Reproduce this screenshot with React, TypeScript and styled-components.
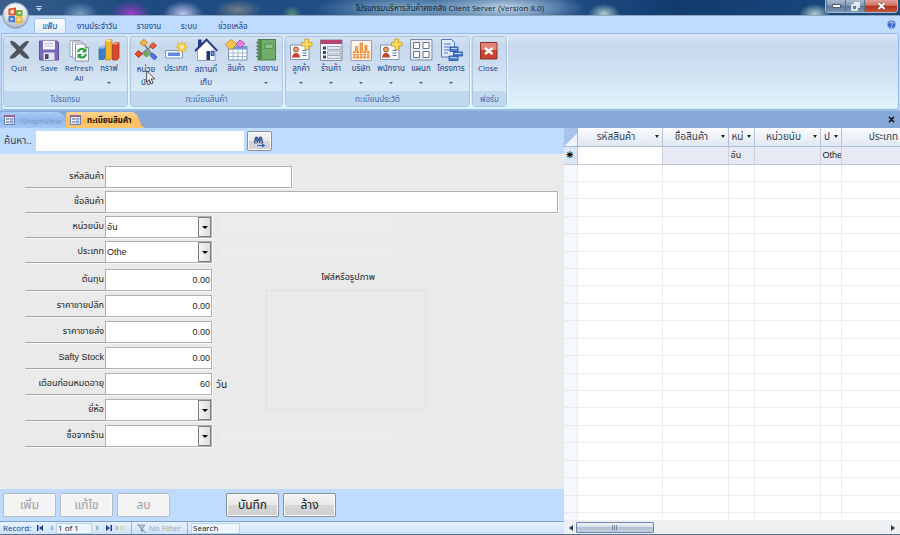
import React from "react";
import styled, { createGlobalStyle, css } from "styled-components";

const UI = `"Open Sans", "Noto Sans", "Noto Sans Thai", "Liberation Sans", sans-serif`;
const FORM = `"Liberation Sans", "Noto Sans Thai", sans-serif`;

const GlobalStyle = createGlobalStyle`
  *, *::before, *::after { box-sizing: border-box; }
  html, body { margin: 0; padding: 0; }
  body { font-family: ${UI}; font-size: 8px; color: #15428b; overflow: hidden; }
  button, input, select { font: inherit; color: inherit; margin: 0; border-radius: 0; }
  svg { display: block; }
`;

/* ---------- window frame ---------- */

const Window = styled.div`
  display: flex;
  flex-direction: column;
  height: 100vh;
  background: #bfdbff;
  border-bottom: 1px solid #56708f;
`;

const TitleBar = styled.header`
  display: grid;
  grid-template-columns: 1fr auto 1fr;
  align-items: start;
  height: 16px;
  border-bottom: 1px solid #8fa6bf;
  background:
    radial-gradient(ellipse 80px 18px at 505px 8px, rgba(200, 222, 240, 0.95), transparent),
    radial-gradient(ellipse 90px 16px at 405px 9px, rgba(150, 190, 215, 0.85), transparent),
    radial-gradient(ellipse 18px 12px at 80px 14px, rgba(150, 185, 215, 0.7), transparent),
    radial-gradient(ellipse 20px 13px at 131px 14px, rgba(160, 60, 200, 0.95), transparent),
    radial-gradient(ellipse 20px 13px at 183px 14px, rgba(200, 200, 240, 0.95), transparent),
    radial-gradient(ellipse 24px 10px at 238px 10px, rgba(130, 135, 135, 0.85), transparent),
    radial-gradient(ellipse 10px 8px at 292px 14px, rgba(100, 160, 110, 0.8), transparent),
    radial-gradient(ellipse 16px 10px at 604px 14px, rgba(190, 220, 210, 0.9), transparent),
    radial-gradient(ellipse 16px 10px at 815px 14px, rgba(190, 220, 210, 0.9), transparent),
    linear-gradient(90deg, #3a5f8c, #1d4a80 15%, #24528a 60%, #123c70 75%, #1b4a80);
`;

const QuickAccess = styled.div`
  padding: 6px 0 0 36px;
`;

const Title = styled.h1`
  margin: 0;
  font-size: 8px;
  line-height: 16px;
  font-weight: 400;
  color: #0b1a2c;
  white-space: nowrap;
`;

const WindowButtons = styled.div`
  justify-self: end;
  display: flex;
  margin-right: 2px;
  border: 1px solid #a9bdd2;
  border-top: 0;
  border-radius: 0 0 4px 4px;
  overflow: hidden;
`;

const WindowButton = styled.button<{ $danger?: boolean }>`
  display: grid;
  place-items: center;
  width: ${(p) => (p.$danger ? 33 : 19)}px;
  height: 12px;
  padding: 0;
  border: 0;
  border-left: 1px solid #5d7793;
  background: ${(p) =>
    p.$danger
      ? "linear-gradient(#e0a196, #d0705f 45%, #b2301a 50%, #c8543a)"
      : "linear-gradient(#a9bbce, #8299b3 45%, #5c7797 50%, #7d97b3)"};
`;

/* ---------- ribbon ---------- */

const MenuRow = styled.nav`
  display: flex;
  align-items: flex-end;
  height: 17px;
  padding-left: 34px;
  padding-right: 4px;
  background: #bfdbff;
`;

const MenuTab = styled.button<{ $active?: boolean; $w: number }>`
  width: ${(p) => p.$w}px;
  height: 15px;
  padding: 0;
  border: 0;
  background: transparent;
  font-size: 8px;
  line-height: 14px;
  white-space: nowrap;
  ${(p) =>
    p.$active &&
    css`
      border: 1px solid #a3c2ea;
      border-bottom: 0;
      border-radius: 3px 3px 0 0;
      background: linear-gradient(#f8fbff, #e3edf9);
    `}
`;

const HelpButton = styled.button`
  margin-left: auto;
  align-self: center;
  padding: 0;
  border: 0;
  background: none;
`;

const OfficeButton = styled.button`
  position: absolute;
  left: 2px;
  top: 2px;
  padding: 0;
  border: 0;
  background: none;
`;

const Ribbon = styled.div`
  display: flex;
  gap: 2px;
  height: 77px;
  margin: 0 1px;
  padding: 2px 1px;
  border: 1px solid #94bbec;
  border-radius: 3px;
  background: linear-gradient(#dbe6f4, #c7d8ed 16%, #cfdef0 45%, #e2f4fd);
  box-shadow: inset 0 -1px 0 #cdf4fb;
`;

const Group = styled.section<{ $w: number }>`
  display: flex;
  flex-direction: column;
  flex: 0 0 ${(p) => p.$w}px;
  border: 1px solid #abc6e6;
  border-radius: 3px;
  overflow: hidden;
  box-shadow: 1px 0 0 #eef6fd;
`;

const GroupItems = styled.div`
  flex: 1;
  display: flex;
`;

const GroupTitle = styled.h2`
  margin: 0;
  height: 15px;
  font-size: 8px;
  line-height: 15px;
  font-weight: 400;
  text-align: center;
  color: #3e6aaa;
  background: #c1d9f0;
`;

const ToolButton = styled.button`
  position: relative;
  flex: 0 0 30px;
  display: flex;
  flex-direction: column;
  align-items: center;
  min-width: 0;
  padding: 1px 0 0;
  border: 0;
  background: none;
  font-size: 8px;
  line-height: 10px;
`;

const ToolLabel = styled.span<{ $tall?: boolean }>`
  margin-top: ${(p) => (p.$tall ? 0 : 1)}px;
  line-height: ${(p) => (p.$tall ? 13 : 10)}px;
  white-space: nowrap;
`;

const Caret = styled.span`
  margin-top: 9px;
  border: 2px solid transparent;
  border-top-color: #33619f;
  border-bottom: 0;
`;

const Pointer = styled.svg`
  position: absolute;
  left: 15px;
  top: 33px;
`;

/* ---------- document tabs ---------- */

const DocTabs = styled.div`
  display: flex;
  align-items: flex-end;
  height: 18px;
  padding-right: 4px;
  background: #86a8d6;
  border-top: 1px solid #9fbce2;
`;

const DocTab = styled.button<{ $active?: boolean }>`
  display: flex;
  align-items: center;
  gap: 6px;
  width: ${(p) => (p.$active ? 79 : 66)}px;
  height: 16px;
  padding: 0 0 0 4px;
  border: 0;
  border-radius: 3px 10px 0 0;
  font-size: 8px;
  white-space: nowrap;
  color: ${(p) => (p.$active ? "#1a1208" : "#7c99c2")};
  font-weight: ${(p) => (p.$active ? 700 : 400)};
  background: ${(p) =>
    p.$active
      ? "linear-gradient(#fdd79a, #fbbd5c 50%, #fdc56c)"
      : "linear-gradient(#a9cbf6, #8fb8ee 50%, #a4c8f6)"};
  clip-path: ${(p) => (p.$active ? "polygon(0 0, 85% 0, 90% 20%, 96% 88%, 100% 100%, 0 100%)" : "none")};
`;

const CloseTab = styled.button`
  margin-left: auto;
  align-self: center;
  padding: 0;
  border: 0;
  background: none;
`;

/* ---------- body ---------- */

const Body = styled.main`
  flex: 1;
  display: flex;
  min-height: 0;
`;

const LeftPane = styled.div`
  flex: 564 1 0;
  min-width: 0;
  display: flex;
  flex-direction: column;
  font-family: ${FORM};
  font-size: 9px;
  color: #222;
`;

const SearchBar = styled.form`
  display: flex;
  align-items: center;
  height: 26px;
  padding-left: 4px;
  background: #bfdbff;
`;

const SearchLabel = styled.label`
  width: 32px;
  font-size: 10px;
  color: #33415a;
  white-space: nowrap;
`;

const SearchInput = styled.input`
  width: 208px;
  height: 20px;
  border: 0;
  background: #fff;
`;

const raised = css`
  border: 1px solid #8b8f96;
  border-radius: 2px;
  background: linear-gradient(#f4f4f4, #e9e9e9 48%, #d6d6d6 52%, #cfcfcf);
  box-shadow: inset 0 0 0 1px #fafafa;
`;

const FindButton = styled.button`
  display: grid;
  place-items: center;
  width: 25px;
  height: 20px;
  margin-left: 3px;
  padding: 0;
  ${raised}
`;

const FormArea = styled.form`
  flex: 1;
  min-height: 0;
  display: flex;
  flex-direction: column;
  gap: 6px;
  padding: 12px 6px 0 25px;
  background: #eaeaea;
`;

const FieldGroup = styled.div<{ $gap: number }>`
  display: flex;
  flex-direction: column;
  gap: ${(p) => p.$gap}px;
`;

const Split = styled.div`
  display: flex;
`;

const Field = styled.div`
  display: flex;
  align-items: stretch;
  height: 22px;
`;

const FieldLabel = styled.label`
  flex: 0 0 80px;
  border-bottom: 1px solid #a5a5a5;
  box-shadow: 0 1px 0 #f8f8f8;
  font-size: 9px;
  line-height: 20px;
  text-align: right;
  white-space: nowrap;
  padding-right: 1px;
`;

const boxed = css`
  border: 1px solid #b0b0b0;
  border-radius: 0;
  background: #fff;
  box-shadow: 1px 1px 0 #f8f8f8;
  outline: 0;
`;

const TextInput = styled.input<{ $w?: number; $num?: boolean }>`
  ${(p) => (p.$w ? `width: ${p.$w}px;` : "flex: 1; min-width: 0;")}
  padding: 0 1px;
  text-align: ${(p) => (p.$num ? "right" : "left")};
  ${boxed}
`;

const Combo = styled.div`
  display: grid;
  grid-template-columns: 1fr 13px;
  width: 107px;
  ${boxed}
`;

const ComboSelect = styled.select`
  grid-area: 1 / 1 / 2 / 3;
  appearance: none;
  border: 0;
  padding: 0 1px;
  background: none;
  outline: 0;
`;

const ComboArrow = styled.span`
  grid-area: 1 / 2;
  display: grid;
  place-items: center;
  pointer-events: none;
  border: 1px solid #7f7f7f;
  background: linear-gradient(90deg, #f6f6f6, #dcdcdc);

  &::after {
    content: "";
    border: 3px solid transparent;
    border-top-color: #000;
    border-bottom: 0;
  }
`;

const Echo = styled.output`
  width: 178px;
  margin-left: 9px;
  background: #ececec;
`;

const Unit = styled.span`
  padding-left: 4px;
  font-size: 10px;
  line-height: 23px;
`;

const Picture = styled.figure`
  display: flex;
  flex-direction: column;
  width: 160px;
  margin: 0 0 0 39px;
`;

const PictureCaption = styled.figcaption`
  height: 21px;
  padding-left: 4px;
  line-height: 17px;
  text-align: center;
`;

const PictureFrame = styled.div`
  height: 120px;
  border: 1px solid #e0e0e0;
`;

const Actions = styled.div`
  display: flex;
  align-items: center;
  gap: 4px;
  height: 32px;
  padding: 0 3px;
  background: #bfdbff;
`;

const ActionGap = styled.span`
  width: 48px;
`;

const ActionButton = styled.button`
  width: 53px;
  height: 24px;
  padding: 0;
  font-size: 12px;
  line-height: 20px;
  ${raised}

  &:disabled {
    color: #a0a0a0;
    border-color: #b3bac2;
    background: #f3f3f3;
  }
`;

/* ---------- record bar ---------- */

const RecordBar = styled.div`
  display: flex;
  align-items: center;
  height: 13px;
  padding-left: 3px;
  border-top: 1px solid #7ba3d6;
  background: linear-gradient(#e6f1fd, #cfe2fa);
  font-family: ${UI};
  font-size: 8px;
  line-height: 12px;
  color: #15428b;
`;

const RecordLabel = styled.label`
  width: 31px;
`;

const RecordButton = styled.button`
  display: grid;
  place-items: center;
  width: 11px;
  height: 12px;
  padding: 0;
  border: 0;
  background: none;
`;

const RecordInput = styled.input<{ $w: number }>`
  width: ${(p) => p.$w}px;
  height: 11px;
  padding: 0 1px;
  border: 1px solid #b8d2f2;
  background: #edf5fe;
  color: #111;
`;

const Filter = styled.button`
  display: flex;
  align-items: center;
  gap: 3px;
  width: 57px;
  height: 12px;
  margin: 0 3px 0 6px;
  padding: 0 0 0 5px;
  border: 0;
  border-left: 1px solid #8fb3e2;
  border-right: 1px solid #8fb3e2;
  background: none;
  color: #a3a39f;
  line-height: 12px;
  white-space: nowrap;
`;

/* ---------- datasheet ---------- */

const RightPane = styled.div`
  flex: 336 1 0;
  min-width: 0;
  display: flex;
  flex-direction: column;
  background: #fff;
`;

const SheetClip = styled.div`
  flex: 1;
  min-height: 0;
  overflow: hidden;
`;

const Sheet = styled.table`
  table-layout: fixed;
  width: 369px;
  height: 100%;
  border-collapse: collapse;
  font-family: ${FORM};
  font-size: 9px;
  color: #222;
`;

const Th = styled.th`
  height: 18px;
  padding: 0;
  font-weight: 400;
  border-right: 1px solid #b4c3d8;
  border-bottom: 1px solid #a9bdd8;
  background: linear-gradient(#fbfcfe, #dfe7f1);
  color: #333f50;
`;

const HeadCell = styled.div`
  display: flex;
  align-items: center;
  padding-right: 3px;
  font-size: 10px;
  line-height: 14px;
  overflow: hidden;
  white-space: nowrap;
`;

const HeadText = styled.span`
  flex: 1;
  text-align: center;
  overflow: hidden;
`;

const HeadArrow = styled.span`
  border: 2px solid transparent;
  border-top: 3px solid #222;
  border-bottom: 0;
`;

const Corner = styled.th`
  padding: 0;
  border-right: 1px solid #9db9dd;
  border-bottom: 1px solid #9db9dd;
  background: linear-gradient(135deg, #a9c4ea 60%, #eef4fb 60%);
`;

const Marker = styled.th`
  height: 18px;
  padding: 0;
  font-size: 9px;
  line-height: 12px;
  color: #000;
  background: #dce7f5;
  border-right: 1px solid #b4c3d8;
  border-bottom: 1px solid #c3c9d2;
`;

const Td = styled.td<{ $kind?: "current" | "filled" }>`
  padding: 0 0 0 2px;
  overflow: hidden;
  white-space: nowrap;
  line-height: 12px;
  border-right: 1px solid ${(p) => (p.$kind ? "#cdd0da" : "#ebedf1")};
  border-bottom: 1px solid ${(p) => (p.$kind ? "#c3c9d2" : "#ebedf1")};
  background: ${(p) => (p.$kind === "filled" ? "#e7eaf5" : "#fff")};
`;

const RowHead = styled.td`
  padding: 0;
  background: #f6f8ff;
  border-right: 1px solid #e6ebf5;
  border-bottom: 1px solid #e6ebf5;
`;

const TailRow = styled.tr`
  height: 8px;
`;

const ScrollBar = styled.div`
  display: flex;
  align-items: center;
  height: 13px;
  padding: 0 2px;
  background: #eeeff0;
`;

const ScrollButton = styled.button`
  display: grid;
  place-items: center;
  width: 10px;
  height: 12px;
  padding: 0;
  border: 0;
  background: none;
`;

const ScrollTrack = styled.div`
  flex: 1;
`;

const ScrollThumb = styled.div`
  display: grid;
  place-items: center;
  width: 78px;
  height: 11px;
  border: 1px solid #6f86ab;
  border-radius: 1px;
  background: linear-gradient(#f2f5fa, #d3dce9 45%, #b1c0d5 50%, #c3cfe0);
`;

/* ---------- icons ---------- */

const Icon = ({ children, size = 24 }: { children: React.ReactNode; size?: number }) => (
  <svg width={size} height={size} viewBox="0 0 24 24" aria-hidden="true">
    {children}
  </svg>
);

const QuitIcon = () => (
  <Icon>
    <path d="M3 3.500 C5 1.500 8 4 12.500 8.500 C17 4 20 2 22 3.500 C20.500 6.500 18 9 15.500 12 C18.500 15 21 17 22.500 20 C20 22 17.500 20.500 12.500 15.500 C8 20.500 5 22 2.500 20 C4 17 7 14.500 9.500 12 C7 9 4 7 3 3.500Z" fill="#50545b" />
  </Icon>
);

const SaveIcon = () => (
  <Icon>
    <path d="M2.500 3h17.500l1.500 1.500V22h-19z" fill="#7c66b6" stroke="#6450a0" />
    <path d="M6 3h12v8.500H6z" fill="#f4f6fb" />
    <path d="M7.500 5.500h9M7.500 8h9" stroke="#b9c3d8" />
    <path d="M6.500 14.500h11V22h-11z" fill="#dfe3ee" />
    <path d="M8 16h3.500v5H8z" fill="#4e4574" />
  </Icon>
);

const RefreshIcon = () => (
  <Icon>
    <path d="M3 2.500h10v16H3z" fill="#f8f9fb" stroke="#9aa5b5" />
    <path d="M5.500 4h10v16h-10z" fill="#fff" stroke="#9aa5b5" />
    <path d="M8.500 6h9.500l3.500 3.500V23h-13z" fill="#fff" stroke="#8593a8" />
    <path d="M18 6v3.500h3.500" fill="#d7dde7" stroke="#8593a8" />
    <path d="M11 14c1-3.500 5-4 7-1.500M19 16c-1 4-5 4.500-7 2" fill="none" stroke="#2da043" strokeWidth="2.200" />
    <path d="M19.500 9.500v5h-5zM10.500 21v-5h5z" fill="#2da043" />
  </Icon>
);

const ChartIcon = () => (
  <Icon>
    <path d="M2 10.500l2-1.500h4.500v11l-2 1.500H2z" fill="#3d7fc4" stroke="#285b96" strokeWidth=".7" />
    <path d="M2 10.500l2-1.500h4.500l-2 1.500z" fill="#9cc7ef" />
    <path d="M8.500 3.500l2-2h4.500v18.500l-2 2H8.500z" fill="#f1b52b" stroke="#b77e11" strokeWidth=".7" />
    <path d="M8.500 3.500l2-2h4.500l-2 2z" fill="#ffe495" />
    <path d="M15.500 6.500l2-2H22V20l-2 2h-4.500z" fill="#d9482a" stroke="#9c2d16" strokeWidth=".7" />
    <path d="M15.500 6.500l2-2H22l-2 2z" fill="#f69b7d" />
  </Icon>
);

const UnitsIcon = () => (
  <Icon>
    <path d="M9 5L20 19M19 7L6 17" stroke="#707a87" strokeWidth="1.500" fill="none" />
    <path d="M9.500 1l4 3.500-3.500 3.500L6 5z" fill="#f5b735" stroke="#bc7b14" strokeWidth=".8" />
    <path d="M19 4.500l3.500 3-3.500 3.500-3.500-3z" fill="#ec5b36" stroke="#b13313" strokeWidth=".8" />
    <path d="M4.500 12.500l4 3.500-4 3.500-3.500-3.500z" fill="#e8492b" stroke="#a92b11" strokeWidth=".8" />
    <path d="M12.500 13l3 3-3 3-3-3z" fill="#6cb64a" stroke="#3d8524" strokeWidth=".8" />
    <path d="M16 17.500l2.500-2.500 4.500 4-2.500 3z" fill="#4c78dd" stroke="#2447a0" strokeWidth=".8" />
  </Icon>
);

const CategoryIcon = () => (
  <Icon>
    <path d="M1.500 12.500h17v7.500h-17z" fill="#f6f9fd" stroke="#7f95ba" />
    <path d="M4 14.500h12V18H4z" fill="#5d8be0" />
    <path d="M18 3.500l1 3 3-2-1.500 3.500 3 1-3 1.500 1.500 3.500-3-2-1 3-1.500-3-3 2 1.500-3.500-3-1.500 3-1-1.500-3.500 3 2z" fill="#ffd13b" stroke="#e0a31c" strokeWidth=".5" />
    <circle cx="18" cy="9" r="2" fill="#fff2ad" />
  </Icon>
);

const HouseIcon = () => (
  <Icon>
    <path d="M4 1.500h3.500v7H4z" fill="#2b3c8e" />
    <path d="M3.500 12L12.500 3 21 12v10.500H3.500z" fill="#fdfdfd" stroke="#7b89a3" strokeWidth=".8" />
    <path d="M1 13L12.500 1.500 23.500 13" fill="none" stroke="#22358b" strokeWidth="1.800" />
    <path d="M12.500 13h3.500v9h-3.500z" fill="#1e3768" />
    <path d="M17 13h3v4.500h-3z" fill="#5e8ad0" stroke="#2b4889" strokeWidth=".8" />
  </Icon>
);

const ProductIcon = () => (
  <Icon>
    <path d="M4.500 8.500h18.500V22H4.500z" fill="#fff" stroke="#7190bd" />
    <path d="M4.500 8.500h18.500v3H4.500z" fill="#6e9ae0" />
    <path d="M4.500 15h18.500M4.500 18.500h18.500M9 11.500V22M14 11.500V22M18.500 11.500V22" stroke="#8ba7ce" strokeWidth=".8" />
    <path d="M7 1.500l6 4.500-6 6-6-5.500z" fill="#f9c44b" stroke="#c68a1b" strokeWidth=".8" />
    <path d="M16 2l5 3.500-5 4.500-4-4z" fill="#e77bd9" stroke="#b149a4" strokeWidth=".8" />
  </Icon>
);

const NotebookIcon = () => (
  <Icon>
    <path d="M4 1.500h17.500v20.500H4z" fill="#73ab6b" stroke="#45804a" />
    <path d="M5 2h3v19.500H5z" fill="#4c8c50" />
    <path d="M11 6h8v4.500h-8z" fill="#8fc186" stroke="#488a49" strokeWidth=".8" />
    <path d="M2 4.500h4M2 8h4M2 11.500h4M2 15h4M2 18.500h4" stroke="#5f7a68" strokeWidth="1.200" />
  </Icon>
);

const ContactIcon = () => (
  <Icon>
    <path d="M1.500 7h18.500v14.500H1.500z" fill="#f7f9fc" stroke="#8395b3" />
    <circle cx="7" cy="11.500" r="2.500" fill="#e6a06a" stroke="#8a3e23" strokeWidth=".8" />
    <path d="M3 19.500c0-6 8-6 8 0z" fill="#c8452d" />
    <path d="M13.500 12.500h4M13.500 15h4M13.500 17.500h4" stroke="#5879b5" />
    <path d="M16 1h3.500v3.500H23V8h-3.500v3.500H16V8h-3.500V4.500H16z" fill="#ffdc55" stroke="#c39a22" strokeWidth=".8" />
  </Icon>
);

const ShopListIcon = () => (
  <Icon>
    <path d="M1.500 2h21.500v20.500H1.500z" fill="#f4f6fa" stroke="#7d8aa1" />
    <path d="M1.500 2h21.500v4H1.500z" fill="#b6446f" />
    <path d="M4 8.500h3v3H4zM4 13h3v3H4zM4 17.500h3v3H4z" fill="#3d4a60" />
    <path d="M8.500 8.500h13v3h-13zM8.500 13h13v3h-13zM8.500 17.500h13v3h-13z" fill="#e6eaf1" stroke="#8e99ab" strokeWidth=".8" />
  </Icon>
);

const CompanyIcon = () => (
  <Icon>
    <path d="M2 2.500h20.500v20H2z" fill="#fff5ea" stroke="#9b9fb0" />
    <path d="M4 13h16.500v7.500H4z" fill="#f08b32" />
    <path d="M6.500 13V8.500h2V13M11 13V5h2.500v8M16 13V7.500h2V13" fill="#f5a552" stroke="#e87c24" strokeWidth=".7" />
    <path d="M4 15.500h16.500M4 18h16.500M7 13v7.500M10.500 13v7.500M14 13v7.500M17.500 13v7.500" stroke="#fff" strokeWidth=".7" />
  </Icon>
);

const DepartmentIcon = () => (
  <Icon>
    <path d="M1.500 1.500H23v20.500H1.500z" fill="#e9eef6" stroke="#7c8ba4" />
    <path d="M4.500 4.500h6v6h-6zM14 4.500h6v6h-6zM4.500 13.500h6v6h-6zM14 13.500h6v6h-6z" fill="#fff" stroke="#66758f" />
  </Icon>
);

const ProjectIcon = () => (
  <Icon>
    <path d="M2.500 1.500h10l3 3V19H2.500z" fill="#dfeafb" stroke="#5378bb" />
    <path d="M5 6h7M5 9h7M5 12h6M5 15h4" stroke="#4a77c6" />
    <path d="M11 9h8v4.500h-8zM14.500 14h9v4h-9zM10 18h9v4.500h-9z" fill="#4d82d6" stroke="#274f9b" strokeWidth=".8" />
    <path d="M12 10h6v1h-6zM15.500 15h7v1h-7zM11 19h7v1h-7z" fill="#b5d1f8" />
  </Icon>
);

const CloseIcon = () => (
  <Icon>
    <path d="M4.500 4.500h16.500v16.500H4.500z" fill="#c9432f" stroke="#84352b" />
    <path d="M5 5h15.500v7H5z" fill="#e48373" />
    <path d="M9 10l7.500 6M16.500 10L9 16" stroke="#fff" strokeWidth="2.500" />
  </Icon>
);

const OfficeLogo = () => (
  <svg width="27" height="27" viewBox="0 0 27 27" role="img" aria-label="Office">
    <defs>
      <radialGradient id="orb" cx="50%" cy="30%" r="70%">
        <stop offset="0" stopColor="#ffffff" />
        <stop offset=".6" stopColor="#dfe4ec" />
        <stop offset="1" stopColor="#9facc0" />
      </radialGradient>
    </defs>
    <circle cx="13.500" cy="13.500" r="12.800" fill="url(#orb)" stroke="#8495ae" />
    <g fill="none" strokeWidth="2.200" strokeLinejoin="round">
      <path d="M7.500 7.500l5.500-1v6h-5.500z" stroke="#e8542a" />
      <path d="M15 9h4.500v4H15z" stroke="#7ab33c" />
      <path d="M7.500 15h4.500v4.500l-4.500-.5z" stroke="#3f7bd0" />
      <path d="M14.500 15.500l5-.5v5l-5 .5z" stroke="#f3b62c" />
    </g>
  </svg>
);

const FormGlyph = () => (
  <svg width="11" height="10" viewBox="0 0 11 10" aria-hidden="true">
    <path d="M.5.500h10v9H.5z" fill="#e8eefb" stroke="#6f7fb2" />
    <path d="M0 0h11v2H0z" fill="#96649b" />
    <path d="M2 4h3M2 7h3" stroke="#46578c" />
    <path d="M6 3.500h3v1.500H6zM6 6.500h3V8H6z" fill="#fff" stroke="#5871b5" strokeWidth=".7" />
  </svg>
);

const Arrow = ({ kind }: { kind: "first" | "prev" | "next" | "last" | "new" }) => {
  const faint = kind === "prev" || kind === "next" || kind === "new";
  const fill = faint ? "#9db9de" : "#15428b";
  return (
    <svg width="8" height="6" viewBox="0 0 8 6" aria-hidden="true">
      {kind === "first" && <path d="M1 0h1.500v6H1zM7 0v6L3 3z" fill={fill} />}
      {kind === "prev" && <path d="M6 0v6L2.500 3z" fill={fill} />}
      {kind === "next" && <path d="M2 0v6l3.500-3z" fill={fill} />}
      {kind === "last" && <path d="M1 0v6l4-3zM5.500 0H7v6H5.500z" fill={fill} />}
      {kind === "new" && (
        <>
          <path d="M0 0v6l3-3z" fill={fill} />
          <path d="M4 1h4v4H4z" fill="#ead9a4" />
        </>
      )}
    </svg>
  );
};

/* ---------- data ---------- */

type Tool = { lines: string[]; icon: React.ReactNode; caret?: boolean; thai?: boolean; pointed?: boolean };

const groups: { title: string; width: number; tools: Tool[] }[] = [
  {
    title: "โปรแกรม",
    width: 125,
    tools: [
      { lines: ["Quit"], icon: <QuitIcon /> },
      { lines: ["Save"], icon: <SaveIcon /> },
      { lines: ["Refresh", "All"], icon: <RefreshIcon /> },
      { lines: ["กราฟ"], icon: <ChartIcon />, caret: true },
    ],
  },
  {
    title: "ทะเบียนสินค้า",
    width: 153,
    tools: [
      { lines: ["หน่วย", "นับ"], icon: <UnitsIcon />, thai: true, pointed: true },
      { lines: ["ประเภท"], icon: <CategoryIcon /> },
      { lines: ["สถานที่", "เก็บ"], icon: <HouseIcon />, thai: true },
      { lines: ["สินค้า"], icon: <ProductIcon /> },
      { lines: ["รายงาน"], icon: <NotebookIcon />, caret: true },
    ],
  },
  {
    title: "ทะเบียนประวัติ",
    width: 185,
    tools: [
      { lines: ["ลูกค้า"], icon: <ContactIcon />, caret: true },
      { lines: ["ร้านค้า"], icon: <ShopListIcon />, caret: true },
      { lines: ["บริษัท"], icon: <CompanyIcon />, caret: true },
      { lines: ["พนักงาน"], icon: <ContactIcon />, caret: true },
      { lines: ["แผนก"], icon: <DepartmentIcon />, caret: true },
      { lines: ["โครงการ"], icon: <ProjectIcon />, caret: true },
    ],
  },
  { title: "ฟอร์ม", width: 35, tools: [{ lines: ["Close"], icon: <CloseIcon /> }] },
];

const menus = [
  { text: "แฟ้ม", w: 32 },
  { text: "งานประจำวัน", w: 62 },
  { text: "รายงาน", w: 42 },
  { text: "ระบบ", w: 38 },
  { text: "ช่วยเหลือ", w: 50 },
];

const columns = [
  { name: "รหัสสินค้า", w: 85, value: "" },
  { name: "ชื่อสินค้า", w: 66, value: "" },
  { name: "หน่", w: 26, value: "อัน" },
  { name: "หน่วยนับ", w: 66, value: "" },
  { name: "ป", w: 21, value: "Othe" },
  { name: "ประเภท", w: 92, value: "" },
];

const ComboField = ({ id, label, value, echo }: { id: string; label: string; value: string; echo?: boolean }) => (
  <Field>
    <FieldLabel htmlFor={id}>{label}</FieldLabel>
    <Combo>
      <ComboSelect id={id} defaultValue={value}>
        <option>{value}</option>
      </ComboSelect>
      <ComboArrow />
    </Combo>
    {echo && <Echo htmlFor={id} />}
  </Field>
);

const NumberField = ({ id, label, value, unit }: { id: string; label: string; value: string; unit?: string }) => (
  <Field>
    <FieldLabel htmlFor={id}>{label}</FieldLabel>
    <TextInput id={id} $w={107} $num defaultValue={value} />
    {unit && <Unit>{unit}</Unit>}
  </Field>
);

export default function App() {
  return (
    <Window>
      <GlobalStyle />
      <TitleBar>
        <QuickAccess>
          <svg width="6" height="5" viewBox="0 0 6 5" aria-hidden="true">
            <path d="M0 0h6v1H0zM0 2h6L3 5z" fill="#b9cfe8" />
          </svg>
        </QuickAccess>
        <Title>โปรแกรมบริหารสินค้าคงคลัง Client Server (Version 8.0)</Title>
        <WindowButtons>
          <WindowButton aria-label="Minimize">
            <svg width="9" height="4" viewBox="0 0 9 4">
              <path d="M.5.500h8v3h-8z" fill="#fff" stroke="#4a5d75" />
            </svg>
          </WindowButton>
          <WindowButton aria-label="Restore">
            <svg width="9" height="9" viewBox="0 0 9 9">
              <path d="M3 1h5v5M1 3h5v5H1z" fill="none" stroke="#fff" strokeWidth="1.500" />
            </svg>
          </WindowButton>
          <WindowButton aria-label="Close" $danger>
            <svg width="9" height="8" viewBox="0 0 9 8">
              <path d="M1.500 1l6 6M7.500 1l-6 6" stroke="#5b3a3a" strokeWidth="3" />
              <path d="M1.500 1l6 6M7.500 1l-6 6" stroke="#fff" strokeWidth="2" />
            </svg>
          </WindowButton>
        </WindowButtons>
      </TitleBar>

      <MenuRow>
        {menus.map((m, i) => (
          <MenuTab key={m.text} $w={m.w} $active={i === 0}>
            {m.text}
          </MenuTab>
        ))}
        <HelpButton aria-label="Help">
          <svg width="9" height="9" viewBox="0 0 9 9">
            <circle cx="4.500" cy="4.500" r="4" fill="#2b62cf" stroke="#88abe6" />
            <path d="M3 3.500c0-2 3-2 3 0 0 1-1.500 1-1.500 2M4.500 6.500v1" stroke="#fff" fill="none" />
          </svg>
        </HelpButton>
      </MenuRow>
      <OfficeButton aria-label="Office menu">
        <OfficeLogo />
      </OfficeButton>

      <Ribbon>
        {groups.map((g) => (
          <Group key={g.title} $w={g.width}>
            <GroupItems>
              {g.tools.map((t) => (
                <ToolButton key={t.lines[0]}>
                  {t.icon}
                  <ToolLabel $tall={t.thai}>
                    {t.lines.map((l, i) => (
                      <React.Fragment key={l}>
                        {i > 0 && <br />}
                        {l}
                      </React.Fragment>
                    ))}
                  </ToolLabel>
                  {t.caret && <Caret />}
                  {t.pointed && (
                    <Pointer width="10" height="15" viewBox="0 0 10 15" aria-hidden="true">
                      <path d="M.7 1v11l2.600-2.400 1.800 4.200 1.900-.8-1.800-4.100h3.600z" fill="#fff" stroke="#222" strokeWidth=".8" />
                    </Pointer>
                  )}
                </ToolButton>
              ))}
            </GroupItems>
            <GroupTitle>{g.title}</GroupTitle>
          </Group>
        ))}
      </Ribbon>

      <DocTabs>
        <DocTab>
          <FormGlyph />
          GraphView
        </DocTab>
        <DocTab $active>
          <FormGlyph />
          ทะเบียนสินค้า
        </DocTab>
        <CloseTab aria-label="Close tab">
          <svg width="9" height="7" viewBox="0 0 9 7">
            <path d="M2 .8l5 5.400M7 .8L2 6.200" stroke="#111" strokeWidth="1.500" />
          </svg>
        </CloseTab>
      </DocTabs>

      <Body>
        <LeftPane>
          <SearchBar>
            <SearchLabel htmlFor="find">ค้นหา..</SearchLabel>
            <SearchInput id="find" />
            <FindButton type="button" aria-label="ค้นหา">
              <svg width="13" height="13" viewBox="0 0 13 13">
                <path d="M1 8L2.500 2h2L5 4h1l.5-2h2L10 8H6.500V6h-2v2z" fill="#4a6aa8" stroke="#243f7c" strokeWidth=".7" />
                <path d="M2 7h2M7 7h2" stroke="#dce8fb" />
                <path d="M4 10.500h6" stroke="#2a62c4" />
                <path d="M9 8.500l3.500 2L9 12.500z" fill="#2a62c4" />
              </svg>
            </FindButton>
          </SearchBar>

          <FormArea>
            <FieldGroup $gap={3}>
              <Field>
                <FieldLabel htmlFor="code">รหัสสินค้า</FieldLabel>
                <TextInput id="code" $w={187} />
              </Field>
              <Field>
                <FieldLabel htmlFor="name">ชื่อสินค้า</FieldLabel>
                <TextInput id="name" />
              </Field>
              <ComboField id="unit" label="หน่วยนับ" value="อัน" echo />
              <ComboField id="type" label="ประเภท" value="Othe" echo />
            </FieldGroup>
            <FieldGroup $gap={4}>
              <Split>
                <FieldGroup $gap={4}>
                  <NumberField id="cost" label="ต้นทุน" value="0.00" />
                  <NumberField id="retail" label="ราคาขายปลีก" value="0.00" />
                  <NumberField id="wholesale" label="ราคาขายส่ง" value="0.00" />
                  <NumberField id="stock" label="Safty Stock" value="0.00" />
                  <NumberField id="expiry" label="เตือนก่อนหมดอายุ" value="60" unit="วัน" />
                  <ComboField id="brand" label="ยี่ห้อ" value="" />
                </FieldGroup>
                <Picture>
                  <PictureCaption>ไฟล์หรือรูปภาพ</PictureCaption>
                  <PictureFrame />
                </Picture>
              </Split>
              <ComboField id="vendor" label="ซื้อจากร้าน" value="" echo />
            </FieldGroup>
          </FormArea>

          <Actions>
            <ActionButton disabled>เพิ่ม</ActionButton>
            <ActionButton disabled>แก้ไข</ActionButton>
            <ActionButton disabled>ลบ</ActionButton>
            <ActionGap />
            <ActionButton>บันทึก</ActionButton>
            <ActionButton>ล้าง</ActionButton>
          </Actions>

          <RecordBar>
            <RecordLabel htmlFor="record">Record:</RecordLabel>
            <RecordButton aria-label="First record"><Arrow kind="first" /></RecordButton>
            <RecordButton aria-label="Previous record"><Arrow kind="prev" /></RecordButton>
            <RecordInput id="record" $w={36} defaultValue="1 of 1" />
            <RecordButton aria-label="Next record"><Arrow kind="next" /></RecordButton>
            <RecordButton aria-label="Last record"><Arrow kind="last" /></RecordButton>
            <RecordButton aria-label="New record"><Arrow kind="new" /></RecordButton>
            <Filter>
              <svg width="9" height="9" viewBox="0 0 9 9" aria-hidden="true">
                <path d="M1 1h7L5.500 4.500V8L4 7V4.500z" fill="#b4c4dc" stroke="#7e93b3" strokeWidth=".8" />
                <path d="M0 0l9 9" stroke="#7e93b3" />
              </svg>
              No Filter
            </Filter>
            <RecordInput $w={49} aria-label="Search" defaultValue="Search" />
          </RecordBar>
        </LeftPane>

        <RightPane>
          <SheetClip>
            <Sheet>
              <colgroup>
                <col width={13} />
                {columns.map((c) => (
                  <col key={c.name} width={c.w} />
                ))}
              </colgroup>
              <thead>
                <tr>
                  <Corner />
                  {columns.map((c) => (
                    <Th key={c.name} scope="col">
                      <HeadCell>
                        <HeadText>{c.name}</HeadText>
                        <HeadArrow />
                      </HeadCell>
                    </Th>
                  ))}
                </tr>
              </thead>
              <tbody>
                <tr>
                  <Marker scope="row">✳</Marker>
                  {columns.map((c, i) => (
                    <Td key={c.name} $kind={i === 0 ? "current" : "filled"}>
                      {c.value}
                    </Td>
                  ))}
                </tr>
                {Array.from({ length: 20 }, (_, r) => (
                  <tr key={r}>
                    <RowHead />
                    {columns.map((c) => (
                      <Td key={c.name} />
                    ))}
                  </tr>
                ))}
                <TailRow>
                  <RowHead />
                  {columns.map((c) => (
                    <Td key={c.name} />
                  ))}
                </TailRow>
              </tbody>
            </Sheet>
          </SheetClip>
          <ScrollBar>
            <ScrollButton aria-label="Scroll left">
              <svg width="4" height="6" viewBox="0 0 4 6"><path d="M4 0v6L0 3z" fill="#26406f" /></svg>
            </ScrollButton>
            <ScrollTrack>
              <ScrollThumb>
                <svg width="6" height="5" viewBox="0 0 6 5" aria-hidden="true">
                  <path d="M.5 0v5M2.500 0v5M4.500 0v5" stroke="#7787a1" />
                </svg>
              </ScrollThumb>
            </ScrollTrack>
            <ScrollButton aria-label="Scroll right">
              <svg width="4" height="6" viewBox="0 0 4 6"><path d="M0 0v6l4-3z" fill="#26406f" /></svg>
            </ScrollButton>
          </ScrollBar>
        </RightPane>
      </Body>
    </Window>
  );
}
